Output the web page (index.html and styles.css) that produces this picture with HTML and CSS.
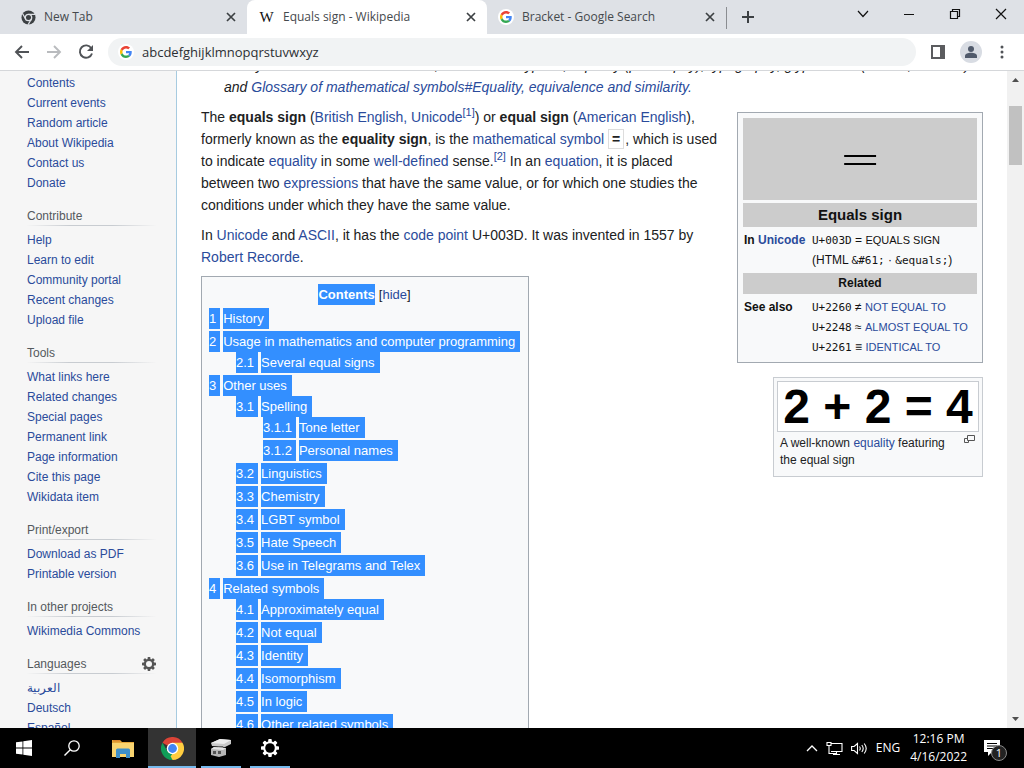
FILE: index.html
```html
<!DOCTYPE html>
<html lang="en">
<head>
<meta charset="utf-8">
<title>Equals sign - Wikipedia</title>
<link rel="stylesheet" href="styles.css">
</head>
<body>
<svg class="defs" aria-hidden="true">
  <symbol id="google" viewBox="0 0 48 48">
    <path fill="#EA4335" d="M24 9.5c3.54 0 6.71 1.22 9.21 3.6l6.85-6.85C35.9 2.38 30.47 0 24 0 14.62 0 6.51 5.38 2.56 13.22l7.98 6.19C12.43 13.72 17.74 9.5 24 9.5z"/>
    <path fill="#4285F4" d="M46.98 24.55c0-1.57-.15-3.09-.38-4.55H24v9.02h12.94c-.58 2.96-2.26 5.48-4.78 7.18l7.73 6c4.51-4.18 7.09-10.36 7.09-17.65z"/>
    <path fill="#FBBC05" d="M10.53 28.59c-.48-1.45-.76-2.99-.76-4.59s.27-3.14.76-4.59l-7.98-6.19C.92 16.46 0 20.12 0 24c0 3.88.92 7.54 2.56 10.78l7.97-6.19z"/>
    <path fill="#34A853" d="M24 48c6.48 0 11.93-2.13 15.89-5.81l-7.73-6c-2.15 1.45-4.92 2.3-8.16 2.3-6.26 0-11.57-4.22-13.47-9.91l-7.98 6.19C6.51 42.62 14.62 48 24 48z"/>
  </symbol>
  <symbol id="x" viewBox="0 0 10 10"><path d="M1 1l8 8M9 1l-8 8" fill="none" stroke="#3c4043" stroke-width="1.7"/></symbol>
  <symbol id="gear" viewBox="0 0 20 20">
    <g fill="currentColor"><rect x="8" y="0" width="4" height="20" rx="1"/><rect x="8" y="0" width="4" height="20" rx="1" transform="rotate(45 10 10)"/><rect x="8" y="0" width="4" height="20" rx="1" transform="rotate(90 10 10)"/><rect x="8" y="0" width="4" height="20" rx="1" transform="rotate(135 10 10)"/><circle cx="10" cy="10" r="7.5"/></g>
  </symbol>
</svg>

<header class="tabs">
  <div class="tab tab-first">
    <svg width="15" height="15" viewBox="0 0 16 16"><circle cx="8" cy="8" r="7.5" fill="#3c4043"/><circle cx="8" cy="8" r="3.4" fill="none" stroke="#dee1e6" stroke-width="1.4"/><path d="M8 4.6h7M5 9.7L1.6 3.7M11 9.7l-3.5 6" stroke="#dee1e6" stroke-width="1.3"/></svg>
    <span class="tab-title">New Tab</span>
    <button class="tab-x" aria-label="Close New Tab"><svg width="10" height="10"><use href="#x"/></svg></button>
  </div>
  <div class="tab tab-active">
    <span class="wiki-icon">W</span>
    <span class="tab-title">Equals sign - Wikipedia</span>
    <button class="tab-x" aria-label="Close Equals sign"><svg width="10" height="10"><use href="#x"/></svg></button>
  </div>
  <div class="tab tab-last">
    <span class="disc"><svg width="12" height="12"><use href="#google"/></svg></span>
    <span class="tab-title">Bracket - Google Search</span>
    <button class="tab-x" aria-label="Close Bracket"><svg width="10" height="10"><use href="#x"/></svg></button>
  </div>
  <button class="new-tab" aria-label="New tab"><svg width="12" height="12" viewBox="0 0 12 12"><path d="M6 0v12M0 6h12" stroke="#3c4043" stroke-width="2"/></svg></button>
  <div class="window-buttons">
    <button aria-label="Search tabs"><svg width="12" height="12" viewBox="0 0 12 12"><path d="M1 3l5 5.500 5-5.500" fill="none" stroke="#111" stroke-width="1.200"/></svg></button>
    <button aria-label="Minimize"><svg width="12" height="12" viewBox="0 0 12 12"><path d="M1 6.500h10" stroke="#111"/></svg></button>
    <button aria-label="Restore"><svg width="12" height="12" viewBox="0 0 12 12"><path d="M1.500 3.500h7v7h-7zM3.500 3.500v-2h7v7h-2" fill="none" stroke="#111" stroke-width="1.200"/></svg></button>
    <button aria-label="Close"><svg width="12" height="12" viewBox="0 0 12 12"><path d="M1 1l10 10M11 1L1 11" stroke="#111" stroke-width="1.200"/></svg></button>
  </div>
</header>

<nav class="toolbar" aria-label="Browser">
  <button aria-label="Back"><svg width="16" height="16" viewBox="0 0 16 16"><path d="M15 8H2M8 2L2 8l6 6" fill="none" stroke="#505357" stroke-width="1.900"/></svg></button>
  <button aria-label="Forward"><svg width="16" height="16" viewBox="0 0 16 16"><path d="M1 8h13M8 2l6 6-6 6" fill="none" stroke="#b9bbbe" stroke-width="1.900"/></svg></button>
  <button aria-label="Reload"><svg width="16" height="16" viewBox="0 0 16 16"><path d="M13.300 4.200A6.200 6.200 0 1 0 14 9.500" fill="none" stroke="#505357" stroke-width="1.900"/><path d="M15 1v6H9z" fill="#505357"/></svg></button>
  <div class="omnibox">
    <span class="disc"><svg width="12" height="12"><use href="#google"/></svg></span>
    <input type="text" aria-label="Address" value="abcdefghijklmnopqrstuvwxyz">
  </div>
  <button class="panel" aria-label="Side panel"><svg width="14" height="14" viewBox="0 0 14 14"><path d="M1 1h12v12H1z" fill="none" stroke="#5b5c5f" stroke-width="2"/><path d="M9 1h4v12H9z" fill="#5b5c5f"/></svg></button>
  <button class="avatar" aria-label="Profile"><svg width="12" height="12" viewBox="0 0 12 12"><circle cx="6" cy="3" r="3" fill="#505a6b"/><path d="M0 12V10c0-2 3-3.200 6-3.200s6 1.200 6 3.200v2z" fill="#505a6b"/></svg></button>
  <button class="more" aria-label="Menu"><svg width="4" height="14" viewBox="0 0 4 14"><circle cx="2" cy="2" r="1.500" fill="#505357"/><circle cx="2" cy="7" r="1.500" fill="#505357"/><circle cx="2" cy="12" r="1.500" fill="#505357"/></svg></button>
</nav>

<div class="view">
  <nav class="sidebar" aria-label="Wikipedia">
    <ul>
      <li><a href="#">Contents</a></li><li><a href="#">Current events</a></li><li><a href="#">Random article</a></li><li><a href="#">About Wikipedia</a></li><li><a href="#">Contact us</a></li><li><a href="#">Donate</a></li>
    </ul>
    <h3>Contribute</h3>
    <ul>
      <li><a href="#">Help</a></li><li><a href="#">Learn to edit</a></li><li><a href="#">Community portal</a></li><li><a href="#">Recent changes</a></li><li><a href="#">Upload file</a></li>
    </ul>
    <h3>Tools</h3>
    <ul>
      <li><a href="#">What links here</a></li><li><a href="#">Related changes</a></li><li><a href="#">Special pages</a></li><li><a href="#">Permanent link</a></li><li><a href="#">Page information</a></li><li><a href="#">Cite this page</a></li><li><a href="#">Wikidata item</a></li>
    </ul>
    <h3>Print/export</h3>
    <ul>
      <li><a href="#">Download as PDF</a></li><li><a href="#">Printable version</a></li>
    </ul>
    <h3>In other projects</h3>
    <ul>
      <li><a href="#">Wikimedia Commons</a></li>
    </ul>
    <h3>Languages <button aria-label="Language settings"><svg width="14" height="14"><use href="#gear"/><circle cx="7" cy="7" r="3" fill="#f6f6f6"/></svg></button></h3>
    <ul>
      <li><a href="#" lang="ar">العربية</a></li><li><a href="#">Deutsch</a></li><li><a href="#">Español</a></li>
    </ul>
  </nav>

  <main class="article">
    <p class="hatnote">For symbols that look like this one, see Double hyphen, Equality (philosophy), typography, glyph forms (names, variants)<br>and <a href="#">Glossary of mathematical symbols#Equality, equivalence and similarity.</a></p>
    <div class="columns">
      <div class="prose">
        <p>The <b>equals sign</b> (<a href="#">British English, Unicode</a><sup><a href="#">[1]</a></sup>) or <b>equal sign</b> (<a href="#">American English</a>), formerly known as the <b>equality sign</b>, is the <a href="#">mathematical symbol</a> <b class="boxed">=</b>, which is used to indicate <a href="#">equality</a> in some <a href="#">well-defined</a> sense.<sup><a href="#">[2]</a></sup> In an <a href="#">equation</a>, it is placed between two <a href="#">expressions</a> that have the same value, or for which one studies the conditions under which they have the same value.</p>
        <p>In <a href="#">Unicode</a> and <a href="#">ASCII</a>, it has the <a href="#">code point</a> U+003D. It was invented in 1557 by <a href="#">Robert Recorde</a>.</p>
        <div class="toc">
          <div class="toc-title"><h2>Contents</h2> <span>[<a href="#">hide</a>]</span></div>
          <ul>
            <li><a href="#"><i>1</i><span>History</span></a></li>
            <li><a href="#"><i>2</i><span>Usage in mathematics and computer programming</span></a>
              <ul><li><a href="#"><i>2.1</i><span>Several equal signs</span></a></li></ul></li>
            <li><a href="#"><i>3</i><span>Other uses</span></a>
              <ul>
                <li><a href="#"><i>3.1</i><span>Spelling</span></a>
                  <ul><li><a href="#"><i>3.1.1</i><span>Tone letter</span></a></li><li><a href="#"><i>3.1.2</i><span>Personal names</span></a></li></ul></li>
                <li><a href="#"><i>3.2</i><span>Linguistics</span></a></li>
                <li><a href="#"><i>3.3</i><span>Chemistry</span></a></li>
                <li><a href="#"><i>3.4</i><span>LGBT symbol</span></a></li>
                <li><a href="#"><i>3.5</i><span>Hate Speech</span></a></li>
                <li><a href="#"><i>3.6</i><span>Use in Telegrams and Telex</span></a></li>
              </ul></li>
            <li><a href="#"><i>4</i><span>Related symbols</span></a>
              <ul>
                <li><a href="#"><i>4.1</i><span>Approximately equal</span></a></li>
                <li><a href="#"><i>4.2</i><span>Not equal</span></a></li>
                <li><a href="#"><i>4.3</i><span>Identity</span></a></li>
                <li><a href="#"><i>4.4</i><span>Isomorphism</span></a></li>
                <li><a href="#"><i>4.5</i><span>In logic</span></a></li>
                <li><a href="#"><i>4.6</i><span>Other related symbols</span></a></li>
              </ul></li>
          </ul>
        </div>
      </div>
      <aside class="side">
        <table class="infobox">
          <tr><td colspan="2" class="symbol">=</td></tr>
          <tr><th colspan="2" class="name">Equals sign</th></tr>
          <tr><th>In <a href="#">Unicode</a></th><td><code>U+003D</code> = <small>EQUALS SIGN</small><br>(HTML <code>&amp;#61;</code> · <code>&amp;equals;</code>)</td></tr>
          <tr><th colspan="2" class="band">Related</th></tr>
          <tr><th>See also</th><td><code>U+2260</code> ≠ <small><a href="#">NOT EQUAL TO</a></small><br><code>U+2248</code> ≈ <small><a href="#">ALMOST EQUAL TO</a></small><br><code>U+2261</code> ≡ <small><a href="#">IDENTICAL TO</a></small></td></tr>
        </table>
        <figure class="thumb">
          <div class="sum">2 + 2 = 4</div>
          <figcaption><span>A well-known <a href="#">equality</a> featuring the equal sign</span>
            <svg width="11" height="9" viewBox="0 0 11 9"><path d="M3.500.5h7v5h-7zM3.500 3.500h-3v4h4v-2" fill="none" stroke="#555"/></svg></figcaption>
        </figure>
      </aside>
    </div>
  </main>

  <div class="scrollbar" aria-hidden="true">
    <svg width="7" height="4" viewBox="0 0 7 4"><path d="M0 4h7L3.500 0z" fill="#505050"/></svg>
    <div class="scroll-thumb"></div>
    <svg class="down" width="7" height="4" viewBox="0 0 7 4"><path d="M0 0h7L3.500 4z" fill="#505050"/></svg>
  </div>
</div>

<footer class="taskbar">
  <button aria-label="Start"><svg width="16" height="16" viewBox="0 0 16 16"><path fill="#fff" d="M0 2.300L6.500 1.400v6.200H0zM7.300 1.300L16 0v7.600H7.300zM0 8.400h6.500v6.200L0 13.700zM7.300 8.400H16V16l-8.700-1.300z"/></svg></button>
  <button aria-label="Search"><svg width="16" height="16" viewBox="0 0 16 16"><circle cx="10" cy="6" r="5.200" fill="none" stroke="#fff" stroke-width="1.300"/><path d="M6.300 9.700L.5 15.500" stroke="#fff" stroke-width="1.400"/></svg></button>
  <div class="apps">
    <button aria-label="File Explorer"><svg width="22" height="19" viewBox="0 0 22 19"><path d="M0 1h8l2 2h12v15H0z" fill="#e5a83b"/><path d="M0 4h22v14H0z" fill="#f8d470"/><path d="M4 19v-8q0-1.500 1.500-1.500h11Q18 9.500 18 11v8h-4v-4H8v4z" fill="#3e8fc9"/><path d="M1 1h7v1.500H1z" fill="#d9862c"/></svg></button>
    <button class="current" aria-label="Chrome"><svg width="23" height="23" viewBox="0 0 24 24"><path d="M12 12L1.600 6A12 12 0 0 1 22.400 6z" fill="#db4437"/><path d="M12 12V6h10.400A12 12 0 0 1 12 24z" fill="#ffcd40"/><path d="M1.600 6L6.800 15l5.200 3 2-.6L12 24A12 12 0 0 1 1.600 6z" fill="#0f9d58"/><path d="M17.200 15L12 24l-2-4 4-5z" fill="#ffcd40"/><circle cx="12" cy="12" r="6" fill="#fff"/><circle cx="12" cy="12" r="4.600" fill="#4285f4"/></svg></button>
    <button class="open" aria-label="Devices"><svg width="22" height="20" viewBox="0 0 22 20"><path d="M1 5l9-4 11 1v4l-6 3-13-1z" fill="#c9c9c9"/><path d="M1 5l9-4 11 1-7 4z" fill="#ececec"/><path d="M8 8h5v3H8z" fill="#666"/><path d="M1 11l3-2 12 1v7l-7 2-8-2z" fill="#b5b5b5"/><path d="M3 13h3v3H3zM8 13h3v3H8z" fill="#555"/><path d="M1 11l3-2 12 1-3 2z" fill="#e4e4e4"/></svg></button>
    <button class="open" aria-label="Settings"><svg width="18" height="18" viewBox="0 0 18 18"><use href="#gear" width="18" height="18"/><circle cx="9" cy="9" r="4.800" fill="#000"/></svg></button>
  </div>
  <div class="tray">
    <button aria-label="Hidden icons"><svg width="12" height="8" viewBox="0 0 12 8"><path d="M1 7l5-5 5 5" fill="none" stroke="#fff" stroke-width="1.300"/></svg></button>
    <button aria-label="Network"><svg width="17" height="15" viewBox="0 0 17 15"><path d="M5 2.500h11v8H5M1 1.500h4v3H1zM3 4.500v8h7M10.500 10.500v3M7 13.500h7" fill="none" stroke="#fff" stroke-width="1.100"/></svg></button>
    <button aria-label="Volume"><svg width="17" height="13" viewBox="0 0 17 13"><path d="M.6 4.500h2.500l3.400-3v10l-3.400-3H.6zM8.500 4.500q1.500 2 0 4M10.800 3q2.800 3.500 0 7M13.200 1.500q4 5 0 10" fill="none" stroke="#fff" stroke-width="1.100"/></svg></button>
    <span>ENG</span>
    <time>12:16 PM<br>4/16/2022</time>
    <button class="notes" aria-label="Notifications"><svg width="16" height="16" viewBox="0 0 16 16"><path d="M0 0h16v12H8l-4 4v-4H0z" fill="#fff"/><path d="M3 3.500h10M3 6h10M3 8.500h7" stroke="#000"/></svg><span class="count">1</span></button>
  </div>
</footer>
</body>
</html>
```
FILE: styles.css
```css
* { box-sizing: border-box; }
body {
  margin: 0;
  height: 100vh;
  display: flex;
  flex-direction: column;
  overflow: hidden;
  background: #fff;
  color: #202122;
  font-family: "Liberation Sans", Arial, sans-serif;
  font-size: 14px;
}
button {
  border: 0;
  padding: 0;
  background: none;
  color: inherit;
  font: inherit;
  display: flex;
  align-items: center;
  justify-content: center;
}
a { color: #2a4b9b; text-decoration: none; }
ul { list-style: none; margin: 0; padding: 0; }
.defs { position: absolute; width: 0; height: 0; }

/* Tab strip */
.tabs {
  display: flex;
  flex: none;
  height: 34px;
  background: #dee1e6;
  color: #45494d;
  font: 12px/34px "Open Sans", "Noto Sans", sans-serif;
}
.tab {
  display: flex;
  align-items: center;
  flex: 0 1 240px;
  gap: 8px;
  padding: 0 10px 0 11px;
}
.tab-first { flex-basis: 247px; padding-left: 21px; }
.tab-active { background: #fff; border-radius: 8px 8px 0 0; }
.tab-last { border-right: 1px solid transparent; border-image: linear-gradient(transparent 8px, #8a8d91 8px, #8a8d91 28px, transparent 28px) 1; }
.tab-title { flex: 1; white-space: nowrap; overflow: hidden; }
.tab-x { width: 12px; height: 12px; }
.wiki-icon { font: 15px/16px "Liberation Serif", serif; color: #111; width: 17px; text-align: center; }
.disc {
  display: flex;
  align-items: center;
  justify-content: center;
  width: 16px;
  height: 16px;
  border-radius: 50%;
  background: #fff;
}
.new-tab { width: 42px; }
.window-buttons { display: flex; margin-left: auto; height: 28px; }
.window-buttons button { width: 46px; }

/* Address bar */
.toolbar {
  display: flex;
  flex: none;
  align-items: center;
  height: 37px;
  padding: 0 8px 0 6px;
  border-bottom: 1px solid #d5d7da;
}
.toolbar button { width: 32px; height: 28px; }
.omnibox {
  display: flex;
  align-items: center;
  flex: 1;
  gap: 8px;
  height: 28px;
  margin: 0 6px;
  padding: 0 10px;
  border-radius: 14px;
  background: #f1f3f4;
}
.omnibox input {
  flex: 1;
  min-width: 0;
  border: 0;
  padding: 0;
  outline: 0;
  background: none;
  color: #2c2f33;
  font: 13px/20px "Open Sans", "Noto Sans", sans-serif;
}
.toolbar .avatar { width: 22px; height: 22px; margin: 0 6px; border-radius: 50%; background: #d8dce3; }
.toolbar .more { width: 28px; }

/* Page */
.view { display: flex; flex: 1; min-height: 0; overflow: hidden; }
.sidebar {
  flex: none;
  width: 177px;
  padding: 2px 32px 0 27px;
  border-right: 1px solid #a7cbe0;
  background: #f6f6f6;
  font-size: 12px;
  line-height: 20px;
}
.sidebar h3 {
  display: flex;
  justify-content: space-between;
  margin: 13px -12px 4px 0;
  height: 20px;
  border-bottom: 1px solid transparent;
  border-image: linear-gradient(to right, transparent, #c8ccd1 33%, #c8ccd1 66%, transparent) 1;
  color: #54595d;
  font-size: 12px;
  font-weight: normal;
}
.sidebar h3 button { color: #555; }
.article { flex: 1; min-width: 0; padding: 0 24px; line-height: 22px; }
.hatnote { margin: -17px 0 8px 23px; font-style: italic; white-space: nowrap; }
.columns { display: flex; gap: 14px; }
.prose { flex: 1; min-width: 0; }
.prose p { margin: 0 0 8px; }
sup { font-size: 11px; line-height: 1; }
.boxed { padding: 1px 3px; margin-right: 1px; border: 1px solid #ddd; }

.toc {
  width: fit-content;
  padding: 7px 8px 7px 7px;
  border: 1px solid #a2a9b1;
  background: #f8f9fa;
  font-size: 13px;
  line-height: 21px;
}
.toc-title { display: flex; justify-content: center; gap: 4px; margin-bottom: 3px; }
.toc h2 { margin: 0; font-size: 13px; background: #338fff; color: #fff; }
.toc li { margin-bottom: 2px; }
.toc li li { margin-left: 27px; }
.toc li:last-child { margin-bottom: 0; }
.toc ul ul { margin-bottom: 2px; }
.toc li a { display: flex; gap: 3px; color: #fff; }
.toc i { padding-right: 4px; font-style: normal; background: #338fff; }
.toc li span { padding-right: 5px; background: #338fff; white-space: nowrap; }

.side { display: flex; flex-direction: column; align-items: flex-end; gap: 14px; width: 246px; margin-top: 6px; }
.infobox {
  width: 100%;
  padding: 2px;
  border: 1px solid #a2a9b1;
  border-spacing: 3px;
  background: #f8f9fa;
  font-size: 12px;
  line-height: 20px;
}
.infobox th, .infobox td { padding: 0 1px; text-align: left; vertical-align: top; white-space: nowrap; color: #111; }
.infobox th { width: 65px; }
.infobox .symbol { height: 82px; background: #ccc; text-align: center; vertical-align: middle; font: 200 51px/40px "DejaVu Sans Light", "DejaVu Sans", sans-serif; color: #000; }
.infobox .name { padding: 2px 0; background: #ccc; text-align: center; font-size: 15px; }
.infobox .band { background: #ccc; text-align: center; height: 21px; }
.infobox small { font-size: 11px; line-height: 1; }
.infobox code { font: 11px/1 "DejaVu Sans Mono", monospace; }
.thumb { width: 210px; margin: 0; padding: 3px; border: 1px solid #c8ccd1; background: #f8f9fa; }
.sum { border: 1px solid #c8ccd1; background: #fff; color: #000; font: bold 48px/49px "Liberation Sans", Arial, sans-serif; text-align: center; white-space: nowrap; }
.thumb figcaption { display: flex; justify-content: space-between; padding: 3px 4px 4px 3px; font-size: 12px; line-height: 17px; }
.thumb figcaption span { width: 172px; }

.scrollbar { display: flex; flex-direction: column; align-items: center; flex: none; width: 17px; padding: 7px 0; background: #f1f1f1; }
.scroll-thumb { width: 13px; height: 59px; margin-top: 24px; background: #c1c1c1; }
.scrollbar .down { margin-top: auto; }

/* Taskbar */
.taskbar {
  display: flex;
  flex: none;
  height: 40px;
  background: #000;
  color: #fff;
  font: 12px/18px "Open Sans", "Noto Sans", sans-serif;
}
.taskbar > button { width: 48px; }
.apps { display: flex; gap: 1px; margin-left: 3px; }
.apps button { width: 48px; }
.apps .current { background: linear-gradient(#76b9ed, #76b9ed) center bottom / 100% 2px no-repeat #333; }
.apps .open { background: linear-gradient(#76b9ed, #76b9ed) center bottom / 40px 2px no-repeat; }
.tray { display: flex; align-items: center; gap: 8px; margin-left: auto; padding-right: 24px; }
.tray time { margin-left: 2px; text-align: center; }
.tray .notes { position: relative; margin-left: 9px; }
.count {
  position: absolute;
  left: 7px;
  top: 5px;
  width: 16px;
  height: 16px;
  border: 1px solid #888;
  border-radius: 50%;
  background: #222;
  font-size: 11px;
  line-height: 14px;
}
```
